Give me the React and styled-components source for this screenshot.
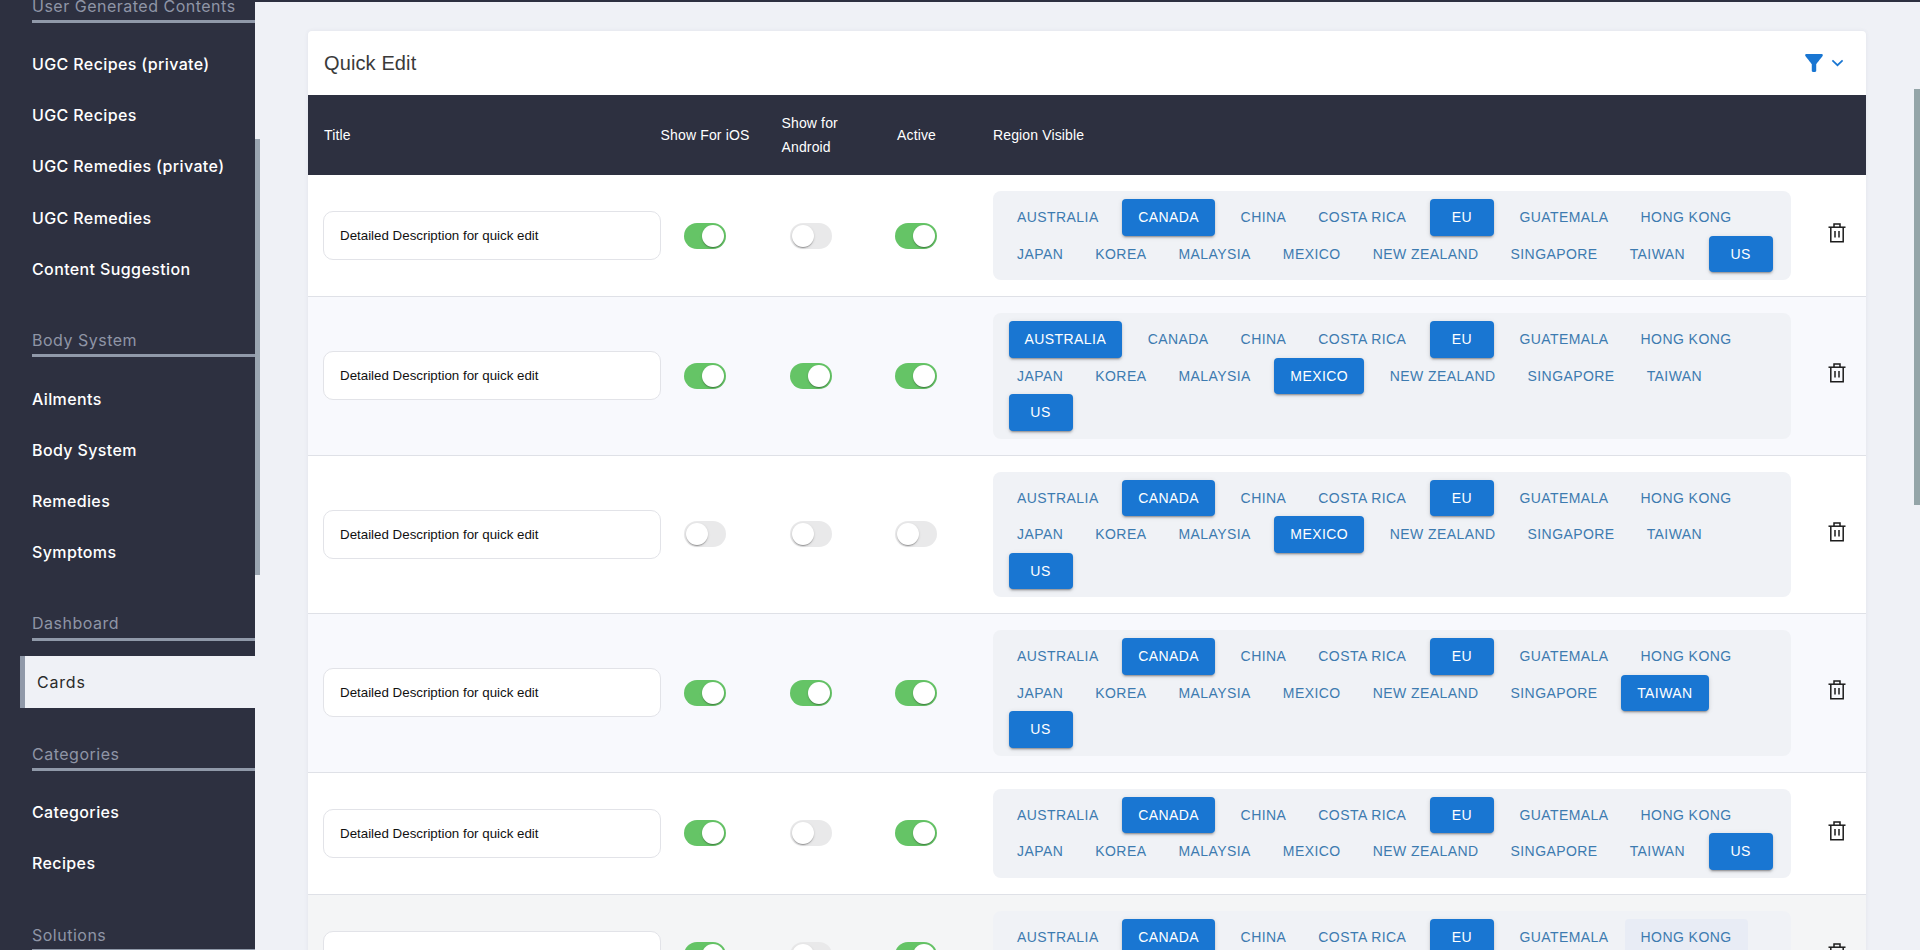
import React from "react";
import styled, { createGlobalStyle } from "styled-components";

const GlobalStyle = createGlobalStyle`
  html, body { margin: 0; padding: 0; height: 950px; overflow: hidden; background: #eff1f6; }
  * { box-sizing: border-box; }
`;

const Page = styled.div`
  position: relative;
  display: flex;
  width: 1920px;
  height: 950px;
  overflow: hidden;
  font-family: "Liberation Sans", Arial, sans-serif;
`;

const Sidebar = styled.aside`
  flex: 0 0 255px;
  height: 950px;
  overflow: hidden;
  background: #2d3040;
  font-family: Inter, "Open Sans", sans-serif;
`;

const SidebarInner = styled.div`
  margin-top: -40px;
`;

const SectionHeading = styled.div`
  height: 63px;
  margin-left: 32px;
  padding-top: 33.5px;
  border-bottom: 3px solid #9099a9;
  color: #8f95a6;
  font-size: 16px;
  line-height: 24px;
  letter-spacing: 0.5px;
  white-space: nowrap;
`;

const ItemList = styled.div`
  display: flex;
  flex-direction: column;
  padding-top: 15.5px;
`;

const NavItem = styled.div`
  display: flex;
  align-items: center;
  height: 51.2px;
  padding-left: 32px;
  color: #fff;
  font-size: 16px;
  font-weight: 500;
  letter-spacing: 0.38px;
  white-space: nowrap;
`;

const ActiveItem = styled.div`
  display: flex;
  align-items: center;
  height: 52px;
  margin-left: 20px;
  padding: 0 0 1px 12px;
  border-left: 5px solid #9099a9;
  background: #eff1f6;
  color: #2a2a2a;
  font-size: 16px;
  letter-spacing: 0.8px;
`;

const Main = styled.main`
  flex: 1;
  min-width: 0;
  padding: 29px 54px 0 53px;
  border-top: 2px solid #2d3040;
`;

const Card = styled.section`
  background: #fff;
  border-radius: 4px 4px 0 0;
  box-shadow: 0 0 4px rgba(60, 70, 100, 0.08);
`;

const CardHeader = styled.header`
  display: flex;
  align-items: center;
  justify-content: space-between;
  height: 64px;
  padding: 0 22px 0 16px;
`;

const CardTitle = styled.h2`
  margin: 0;
  color: #3a3a3a;
  font-size: 20px;
  font-weight: 400;
  letter-spacing: 0.12px;
`;

const FilterGroup = styled.div`
  display: flex;
  align-items: center;
  gap: 7px;
  color: #1976d2;
`;

const gridColumns = "338px 88px 123px 88px 33px 798px 1fr";

const HeadRow = styled.div`
  display: grid;
  grid-template-columns: ${gridColumns};
  align-items: center;
  height: 80px;
  padding-left: 15px;
  background: #2d3040;
  color: #fff;
  font-size: 14px;
  line-height: 24px;
  letter-spacing: 0.14px;
`;

const TitleHead = styled.div`
  padding-left: 1px;
`;

const CenterHead = styled.div`
  justify-self: center;
  width: ${(p) => p.$w || "auto"};
  margin-left: ${(p) => p.$ml || "0"};
  white-space: ${(p) => (p.$wrap ? "normal" : "nowrap")};
`;

const RegionHead = styled.div`
  grid-column: 6;
`;

const Row = styled.div`
  display: grid;
  grid-template-columns: ${gridColumns};
  align-items: center;
  padding: 16px 0 16px 15px;
  border-bottom: 1px solid #dfe1e7;
  background: ${(p) => p.$bg};
`;

const TitleField = styled.div`
  display: flex;
  align-items: center;
  height: 49px;
  padding-left: 16px;
  border: 1px solid #e2e3e8;
  border-radius: 10px;
  background: #fff;
  color: #111;
  font-size: 13.33px;
`;

const ToggleCell = styled.div`
  display: flex;
  justify-content: center;
`;

const Toggle = styled.span`
  display: flex;
  justify-content: ${(p) => (p.$on ? "flex-end" : "flex-start")};
  width: 42px;
  height: 26px;
  padding: 2px;
  border-radius: 13px;
  background: ${(p) => (p.$on ? "#65c466" : "#e9e9ea")};
`;

const Thumb = styled.span`
  width: 22px;
  height: 22px;
  border-radius: 50%;
  background: #fff;
  box-shadow: 0 2px 1px -1px rgba(0, 0, 0, 0.2), 0 1px 1px rgba(0, 0, 0, 0.14), 0 1px 3px rgba(0, 0, 0, 0.12);
`;

const RegionBox = styled.div`
  grid-column: 6;
  display: flex;
  flex-wrap: wrap;
  padding: 8px 5px 8px 8px;
  border-radius: 8px;
  background: #f0f2f6;
`;

const RegionButton = styled.span`
  display: inline-flex;
  align-items: center;
  justify-content: center;
  min-width: 64px;
  height: 36.5px;
  margin: ${(p) => (p.$on ? "0 9.5px 0 7.5px" : "0")};
  padding: 0 16px;
  border-radius: 4px;
  background: ${(p) => (p.$on ? "#1976d2" : p.$hover ? "#e8ecf5" : "transparent")};
  box-shadow: ${(p) =>
    p.$on
      ? "0 3px 1px -2px rgba(0,0,0,.2), 0 2px 2px rgba(0,0,0,.14), 0 1px 5px rgba(0,0,0,.12)"
      : "none"};
  color: ${(p) => (p.$on ? "#fff" : "#3d7bb0")};
  font-size: 14px;
  letter-spacing: 0.43px;
  text-transform: uppercase;
  white-space: nowrap;
`;

const DeleteCell = styled.div`
  display: flex;
  justify-content: center;
  padding: 0 0 5px 16px;
  color: #1c1c1c;
`;

const Thumbbar = styled.div`
  position: absolute;
  top: ${(p) => p.$top}px;
  left: ${(p) => p.$left}px;
  width: ${(p) => p.$w}px;
  height: ${(p) => p.$h}px;
  background: ${(p) => p.$c};
`;

const FilterIcon = () => (
  <svg width="20" height="20" viewBox="3 3 18 18" fill="currentColor" aria-hidden="true">
    <path d="M4.25 5.61C6.27 8.2 10 13 10 13v6c0 .55.45 1 1 1h2c.55 0 1-.45 1-1v-6s3.72-4.8 5.74-7.39c.51-.66.04-1.61-.79-1.61H5.04c-.83 0-1.3.95-.79 1.61z" />
  </svg>
);

const ChevronIcon = () => (
  <svg width="13" height="8" viewBox="0 0 14 8" fill="none" stroke="currentColor" strokeWidth="1.8" aria-hidden="true">
    <path d="M1.5 1.2 7 6.4l5.5-5.2" />
  </svg>
);

const TrashIcon = () => (
  <svg width="18" height="20" viewBox="0 0 18 20" fill="none" stroke="currentColor" strokeWidth="1.5" aria-hidden="true">
    <path d="M0.5 4.2h17" />
    <path d="M6 4V1h6v3" />
    <path d="M2.8 4.2v14.5h12.4V4.2" />
    <path d="M7 8v6.5M11 8v6.5" />
  </svg>
);

const regions = [
  "Australia", "Canada", "China", "Costa Rica", "EU", "Guatemala", "Hong Kong",
  "Japan", "Korea", "Malaysia", "Mexico", "New Zealand", "Singapore", "Taiwan", "US",
];

const rows = [
  { bg: "#fff", ios: true, android: false, active: true, on: ["Canada", "EU", "US"] },
  { bg: "#f8f9fd", ios: true, android: true, active: true, on: ["Australia", "EU", "Mexico", "US"] },
  { bg: "#fff", ios: false, android: false, active: false, on: ["Canada", "EU", "Mexico", "US"] },
  { bg: "#f8f9fd", ios: true, android: true, active: true, on: ["Canada", "EU", "Taiwan", "US"] },
  { bg: "#fff", ios: true, android: false, active: true, on: ["Canada", "EU", "US"] },
  { bg: "#f4f5f6", ios: true, android: false, active: true, on: ["Canada", "EU", "US"], hover: "Hong Kong" },
];

const nav = [
  { items: ["UGC Recipes (private)", "UGC Recipes", "UGC Remedies (private)", "UGC Remedies", "Content Suggestion"], title: "User Generated Contents" },
  { items: ["Ailments", "Body System", "Remedies", "Symptoms"], title: "Body System" },
  { active: "Cards", title: "Dashboard" },
  { items: ["Categories", "Recipes"], title: "Categories" },
  { items: [], title: "Solutions" },
];

const Switch = ({ on }) => (
  <ToggleCell>
    <Toggle $on={on}>
      <Thumb />
    </Toggle>
  </ToggleCell>
);

export default function App() {
  return (
    <Page>
      <GlobalStyle />
      <Sidebar>
        <SidebarInner>
          {nav.map((section) => (
            <React.Fragment key={section.title}>
              <SectionHeading>{section.title}</SectionHeading>
              <ItemList>
                {section.active && <ActiveItem>{section.active}</ActiveItem>}
                {section.items &&
                  section.items.map((item) => <NavItem key={item}>{item}</NavItem>)}
              </ItemList>
            </React.Fragment>
          ))}
        </SidebarInner>
      </Sidebar>
      <Main>
        <Card>
          <CardHeader>
            <CardTitle>Quick Edit</CardTitle>
            <FilterGroup>
              <FilterIcon />
              <ChevronIcon />
            </FilterGroup>
          </CardHeader>
          <HeadRow>
            <TitleHead>Title</TitleHead>
            <CenterHead>Show For iOS</CenterHead>
            <CenterHead $wrap $w="58px">Show for Android</CenterHead>
            <CenterHead $ml="1px">Active</CenterHead>
            <RegionHead>Region Visible</RegionHead>
          </HeadRow>
          {rows.map((row, i) => (
            <Row key={i} $bg={row.bg}>
              <TitleField>Detailed Description for quick edit</TitleField>
              <Switch on={row.ios} />
              <Switch on={row.android} />
              <Switch on={row.active} />
              <RegionBox>
                {regions.map((region) => (
                  <RegionButton
                    key={region}
                    $on={row.on.includes(region)}
                    $hover={row.hover === region}
                  >
                    {region}
                  </RegionButton>
                ))}
              </RegionBox>
              <DeleteCell>
                <TrashIcon />
              </DeleteCell>
            </Row>
          ))}
        </Card>
      </Main>
      <Thumbbar $top={139} $left={255} $w={5} $h={436} $c="#9aa5b1" />
      <Thumbbar $top={89} $left={1914} $w={6} $h={416} $c="#94a5a8" />
    </Page>
  );
}
